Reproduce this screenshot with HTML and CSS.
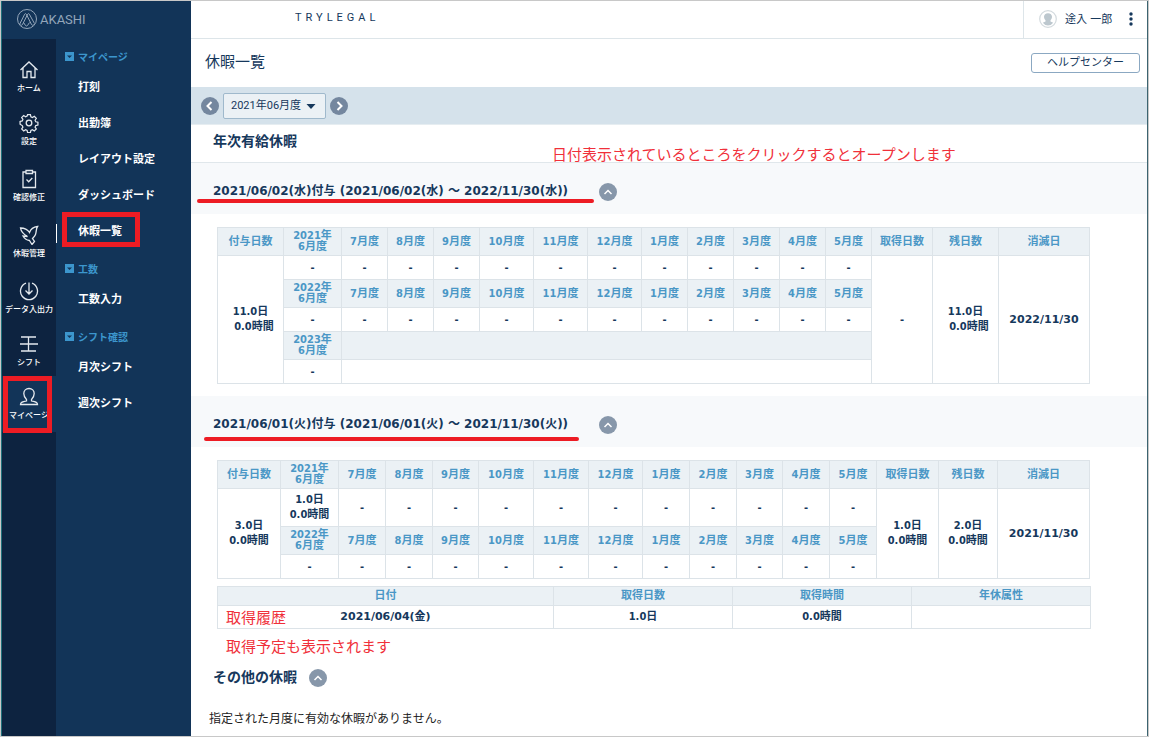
FILE: index.html
```html
<!DOCTYPE html>
<html lang="ja">
<head>
<meta charset="utf-8">
<title>休暇一覧 - AKASHI</title>
<link rel="stylesheet" href="styles.css">
</head>
<body>
<div class="app">
  <aside class="sidebar">
    <a class="brand" href="#">
      <svg class="brand-mark" viewBox="0 0 22 22" aria-hidden="true"><circle cx="11" cy="11" r="9.5"/><path d="M3.500 16.500 8.700 6.200Q9.500 5 10.300 6.200L15.500 16.500Q16.500 18 17.500 16.500M4.500 16.500Q5.500 18 6.500 16.500L11.700 6.200Q12.500 5 13.300 6.200L18.500 15.500M7.500 14.500l2 3q1 1 2 0l2-3"/></svg>
      <span>AKASHI</span>
    </a>
    <div class="navs">
      <nav class="rail" aria-label="メイン">
        <a class="rail-item rail-short" href="#"><svg viewBox="0 0 20 20"><path d="M1.500 10 10 2l8.500 8M4 8v9.500h4V11.500h4v6h4V8"/></svg><span>ホーム</span></a>
        <a class="rail-item" href="#"><svg viewBox="0 0 20 20"><circle cx="10" cy="10" r="2.800"/><path d="M8.500 1.500h3l.5 2.300 1.600.7 2-1.300 2.100 2.100-1.300 2 .7 1.600 2.300.5v3l-2.300.5-.7 1.600 1.300 2-2.100 2.100-2-1.300-1.600.7-.5 2.300h-3L8 18l-1.600-.7-2 1.300-2.100-2.100 1.300-2-.7-1.600L.6 11.500v-3L2.900 8l.7-1.600-1.300-2 2.100-2.100 2 1.300L8 2.900z" transform="translate(.5 .3) scale(.95)"/></svg><span>設定</span></a>
        <a class="rail-item" href="#"><svg viewBox="0 0 20 20"><path d="M7 3H4v15.500h12.500V3h-3M7 1.500h6.500v3H7zM7.500 10.500l2.200 2.200 3.600-3.700"/></svg><span>確認修正</span></a>
        <a class="rail-item" href="#"><svg viewBox="0 0 20 20"><path d="M1.500 3C5 3 8.500 4.500 10.500 7.500 11.500 4.500 14 2 18.500 1.500 17 3.500 17.500 7 16.500 9.500 15.800 11.500 14.500 12.500 13.500 13.500L15.500 16.500 13 19.500 10.500 15.500C7 15 5 13 4 11L8.500 11.500C5 9.500 2 6.500 1.500 3z"/></svg><span>休暇管理</span></a>
        <a class="rail-item rail-short" href="#"><svg viewBox="0 0 20 20"><path d="M7 2.200a8.500 8.500 0 1 0 6 0M10 1.500V13M6.500 9.500 10 13l3.500-3.500"/></svg><span>データ入出力</span></a>
        <a class="rail-item rail-short" href="#"><svg viewBox="0 0 20 20"><path d="M2 3h15M1 10h18M2 17h15M9.500 3v14"/></svg><span>シフト</span></a>
        <a class="rail-item rail-active marked" href="#"><svg viewBox="0 0 20 20"><path d="M7.500 12.500C5.500 10.500 4.800 8.500 4.800 6.500 4.800 3.500 7 1.500 10 1.500s5.200 2 5.200 5c0 2-.7 4-2.700 6v1.500c2.500.8 6 .5 6 3.500H1.500c0-3 3.500-2.700 6-3.500z"/></svg><span>マイページ</span></a>
      </nav>
      <nav class="menu" aria-label="サブ">
        <section class="menu-group">
          <h2 class="menu-head"><svg viewBox="0 0 9 9"><path class="box" d="M0 0h9v9H0z"/><path class="tri" d="M2 3.500h5L4.500 6z"/></svg>マイページ</h2>
          <a class="menu-item" href="#">打刻</a>
          <a class="menu-item" href="#">出勤簿</a>
          <a class="menu-item" href="#">レイアウト設定</a>
          <a class="menu-item" href="#">ダッシュボード</a>
          <a class="menu-item menu-current marked" href="#">休暇一覧</a>
        </section>
        <section class="menu-group">
          <h2 class="menu-head"><svg viewBox="0 0 9 9"><path class="box" d="M0 0h9v9H0z"/><path class="tri" d="M2 3.500h5L4.500 6z"/></svg>工数</h2>
          <a class="menu-item" href="#">工数入力</a>
        </section>
        <section class="menu-group">
          <h2 class="menu-head"><svg viewBox="0 0 9 9"><path class="box" d="M0 0h9v9H0z"/><path class="tri" d="M2 3.500h5L4.500 6z"/></svg>シフト確認</h2>
          <a class="menu-item" href="#">月次シフト</a>
          <a class="menu-item" href="#">週次シフト</a>
        </section>
      </nav>
    </div>
  </aside>

  <main class="main">
    <header class="topbar">
      <span class="company">TRYLEGAL</span>
      <div class="user">
        <svg class="avatar" viewBox="0 0 18 18" aria-hidden="true"><circle cx="9" cy="9" r="8.300" fill="#fff" stroke="#d3dade" stroke-width="1.200"/><path d="M9 3.200c2.500 0 4 1.600 4 3.600 0 1.500-.7 2.700-1.500 3.500v1.200l2.700 1.300A6.600 6.600 0 0 1 9 15.600a6.600 6.600 0 0 1-5.200-2.800l2.700-1.300v-1.200C5.700 9.500 5 8.300 5 6.800c0-2 1.500-3.600 4-3.600z" fill="#bcc7ce"/></svg>
        <span class="user-name">途入 一郎</span>
        <button class="more" type="button" aria-label="メニュー"><svg viewBox="0 0 4 14"><circle cx="2" cy="2" r="1.700"/><circle cx="2" cy="7" r="1.700"/><circle cx="2" cy="12" r="1.700"/></svg></button>
      </div>
    </header>

    <div class="title-row">
      <h1 class="page-title">休暇一覧</h1>
      <button class="help" type="button">ヘルプセンター</button>
    </div>

    <div class="period">
      <button class="round" type="button" aria-label="前の月度"><svg viewBox="0 0 18 18"><path d="M10.500 5 6.500 9l4 4"/></svg></button>
      <div class="period-select">
        <select aria-label="月度"><option>2021年06月度</option></select>
        <svg viewBox="0 0 10 5" aria-hidden="true"><path d="M.5 0h9L5 5z"/></svg>
      </div>
      <button class="round" type="button" aria-label="次の月度"><svg viewBox="0 0 18 18"><path d="m7.500 5 4 4-4 4"/></svg></button>
    </div>

    <div class="section-head">
      <h2 class="section-title">年次有給休暇</h2>
      <p class="note note-open">日付表示されているところをクリックするとオープンします</p>
    </div>

    <section>
      <div class="grant">
        <h3 class="grant-title stroke-wide">2021/06/02(水)付与 (2021/06/02(水) ～ 2022/11/30(水))</h3>
        <button class="round toggle" type="button" aria-label="閉じる"><svg viewBox="0 0 18 18"><path d="m5.500 11 3.500-3.500 3.500 3.500"/></svg></button>
      </div>
      <div class="tables">
        <table class="grid">
          <colgroup><col class="w66"><col class="w58"><col class="w46" span="3"><col class="w54" span="3"><col class="w46" span="5"><col class="w61"><col class="w66"><col class="w91"></colgroup>
          <tr class="head"><th>付与日数</th><th class="year">2021年<br>6月度</th><th>7月度</th><th>8月度</th><th>9月度</th><th>10月度</th><th>11月度</th><th>12月度</th><th>1月度</th><th>2月度</th><th>3月度</th><th>4月度</th><th>5月度</th><th>取得日数</th><th>残日数</th><th>消滅日</th></tr>
          <tr class="short"><td rowspan="5">11.0日<br>&nbsp;&nbsp;0.0時間</td><td>-</td><td>-</td><td>-</td><td>-</td><td>-</td><td>-</td><td>-</td><td>-</td><td>-</td><td>-</td><td>-</td><td>-</td><td rowspan="5">-</td><td rowspan="5">11.0日<br>&nbsp;&nbsp;0.0時間</td><td class="date" rowspan="5">2022/11/30</td></tr>
          <tr class="head"><th class="year">2022年<br>6月度</th><th>7月度</th><th>8月度</th><th>9月度</th><th>10月度</th><th>11月度</th><th>12月度</th><th>1月度</th><th>2月度</th><th>3月度</th><th>4月度</th><th>5月度</th></tr>
          <tr class="short"><td>-</td><td>-</td><td>-</td><td>-</td><td>-</td><td>-</td><td>-</td><td>-</td><td>-</td><td>-</td><td>-</td><td>-</td></tr>
          <tr class="head"><th class="year">2023年<br>6月度</th><th colspan="11"></th></tr>
          <tr class="short"><td>-</td><td colspan="11"></td></tr>
        </table>
      </div>
    </section>

    <section>
      <div class="grant">
        <h3 class="grant-title stroke-low">2021/06/01(火)付与 (2021/06/01(火) ～ 2021/11/30(火))</h3>
        <button class="round toggle" type="button" aria-label="閉じる"><svg viewBox="0 0 18 18"><path d="m5.500 11 3.500-3.500 3.500 3.500"/></svg></button>
      </div>
      <div class="tables">
        <table class="grid">
          <colgroup><col class="w63"><col class="w58"><col class="w47" span="2"><col class="w46"><col class="w55" span="2"><col class="w54"><col class="w47" span="2"><col class="w46"><col class="w47" span="2"><col class="w62"><col class="w59"><col class="w92"></colgroup>
          <tr class="head"><th>付与日数</th><th class="year">2021年<br>6月度</th><th>7月度</th><th>8月度</th><th>9月度</th><th>10月度</th><th>11月度</th><th>12月度</th><th>1月度</th><th>2月度</th><th>3月度</th><th>4月度</th><th>5月度</th><th>取得日数</th><th>残日数</th><th>消滅日</th></tr>
          <tr class="tall"><td rowspan="3">3.0日<br>0.0時間</td><td>1.0日<br>0.0時間</td><td>-</td><td>-</td><td>-</td><td>-</td><td>-</td><td>-</td><td>-</td><td>-</td><td>-</td><td>-</td><td>-</td><td rowspan="3">1.0日<br>0.0時間</td><td rowspan="3">2.0日<br>0.0時間</td><td class="date" rowspan="3">2021/11/30</td></tr>
          <tr class="head"><th class="year">2022年<br>6月度</th><th>7月度</th><th>8月度</th><th>9月度</th><th>10月度</th><th>11月度</th><th>12月度</th><th>1月度</th><th>2月度</th><th>3月度</th><th>4月度</th><th>5月度</th></tr>
          <tr class="short"><td>-</td><td>-</td><td>-</td><td>-</td><td>-</td><td>-</td><td>-</td><td>-</td><td>-</td><td>-</td><td>-</td><td>-</td></tr>
        </table>
        <div class="history">
          <table class="grid">
            <colgroup><col class="w336"><col class="w179" span="3"></colgroup>
            <tr class="history-head"><th>日付</th><th>取得日数</th><th>取得時間</th><th>年休属性</th></tr>
            <tr class="history-row"><td class="date">2021/06/04(金)</td><td>1.0日</td><td>0.0時間</td><td></td></tr>
          </table>
          <p class="note note-history">取得履歴</p>
        </div>
        <p class="note note-plan">取得予定も表示されます</p>
      </div>
    </section>

    <section>
      <div class="other">
        <h2 class="section-title">その他の休暇</h2>
        <button class="round toggle" type="button" aria-label="閉じる"><svg viewBox="0 0 18 18"><path d="m5.500 11 3.500-3.500 3.500 3.500"/></svg></button>
      </div>
      <p class="empty">指定された月度に有効な休暇がありません。</p>
    </section>
  </main>
</div>
</body>
</html>
```
FILE: styles.css
```css
*,
*::after {
  box-sizing: border-box;
}

body {
  margin: 0;
  color: #16385c;
  font-family: "DejaVu Sans Condensed", "Noto Sans CJK JP", sans-serif;
  font-size: 11px;
}

h1, h2, h3, p {
  margin: 0;
}

a {
  color: inherit;
  text-decoration: none;
}

button, select {
  margin: 0;
  padding: 0;
  color: inherit;
  font: inherit;
}

svg {
  display: block;
}

.app {
  display: flex;
  min-height: 100vh;
  border: 1px solid #c8c8c8;
}

/* Sidebar */

.sidebar {
  display: flex;
  flex-direction: column;
  flex: none;
  width: 190px;
  background: #123458;
  border-left: 1px solid #1f6f7a;
}

.brand {
  display: flex;
  align-items: center;
  gap: 2px;
  height: 38px;
  padding: 0 0 2px 14px;
  color: #94a6ba;
  font-family: Roboto, sans-serif;
  font-size: 13px;
  font-weight: 400;
}

.brand-mark {
  width: 22px;
  height: 22px;
  fill: none;
  stroke: #94a6ba;
}

.navs {
  display: flex;
  flex: 1;
}

.rail {
  width: 54px;
  padding-top: 10px;
  background: #0d2340;
}

.rail-item {
  display: flex;
  flex-direction: column;
  align-items: center;
  gap: 3px;
  height: 56px;
  padding-top: 11px;
  color: #fff;
  font-size: 8px;
  font-weight: 500;
  line-height: 12px;
  white-space: nowrap;
}

.rail-short {
  height: 53px;
}

.rail-item svg {
  width: 20px;
  height: 20px;
  fill: none;
  stroke: #e4e9ee;
  stroke-width: 1.3;
}

.rail-active {
  background: #123458;
}

.menu {
  display: flex;
  flex-direction: column;
  flex: 1;
  gap: 8px;
  padding-top: 5px;
}

.menu-head {
  display: flex;
  align-items: center;
  gap: 4px;
  height: 24px;
  padding-left: 9px;
  color: #3c96cd;
  font-size: 10px;
  font-weight: 700;
}

.menu-head svg {
  width: 9px;
  height: 9px;
}

.menu-head .box {
  fill: #3c96cd;
}

.menu-head .tri {
  fill: #123458;
}

.menu-item {
  display: flex;
  align-items: center;
  height: 36px;
  padding-left: 22px;
  color: #fff;
  font-weight: 700;
}

.menu-current {
  border-left: 1px solid #fff;
  border-image: linear-gradient(transparent 12px, #fff 12px, #fff 30px, transparent 30px) 1;
  padding-left: 21px;
}

.marked {
  position: relative;
}

.marked::after {
  content: "";
  position: absolute;
  border: 5px solid #ed1c24;
}

.rail-active::after {
  inset: 0 4px -1px 1px;
}

.menu-current::after {
  top: 0;
  left: 5px;
  width: 78px;
  height: 35px;
}

/* Main column */

.main {
  flex: 1;
  min-width: 0;
  background: #fff;
  border-right: 1px solid #3c6470;
}

.topbar {
  display: flex;
  justify-content: space-between;
  height: 38px;
  border-bottom: 1px solid #dde5e9;
}

.company {
  padding: 10px 0 0 104px;
  font-family: Roboto, sans-serif;
  letter-spacing: 4px;
}

.user {
  display: flex;
  align-items: center;
  gap: 8px;
  width: 124px;
  padding: 0 12px 2px 15px;
  border-left: 1px solid #dde5e9;
}

.avatar {
  width: 18px;
  height: 18px;
}

.user-name {
  flex: 1;
  padding-bottom: 2px;
  white-space: nowrap;
}

.more {
  display: flex;
  justify-content: center;
  width: 8px;
  background: none;
  border: 0;
}

.more svg {
  width: 4px;
  height: 14px;
  fill: #16385c;
}

.title-row {
  display: flex;
  align-items: center;
  justify-content: space-between;
  height: 48px;
  padding: 0 7px 0 14px;
}

.page-title {
  padding-bottom: 6px;
  font-size: 15px;
  font-weight: 400;
}

.help {
  width: 109px;
  height: 20px;
  background: #fff;
  border: 1px solid #8ba8c2;
  border-radius: 3px;
  line-height: 16px;
}

.period {
  display: flex;
  align-items: center;
  gap: 4px;
  height: 38px;
  padding-left: 10px;
  background: #d5e2eb;
  border-bottom: 1px solid #e6edf1;
}

.round {
  flex: none;
  width: 18px;
  height: 18px;
  background: #74879f;
  border: 0;
  border-radius: 50%;
}

.round svg {
  width: 18px;
  height: 18px;
  fill: none;
  stroke: #fff;
  stroke-width: 2;
}

.toggle {
  background: #8797aa;
}

.toggle svg {
  stroke-width: 1.5;
}

.period-select {
  position: relative;
}

.period-select select {
  display: block;
  width: 103px;
  height: 26px;
  padding-left: 7px;
  appearance: none;
  background: #ebf1f5;
  border: 1px solid #9fb9cc;
  border-radius: 2px;
  font-family: Roboto, "Noto Sans CJK JP", sans-serif;
}

.period-select svg {
  position: absolute;
  top: 11px;
  right: 10px;
  width: 10px;
  height: 5px;
  fill: #16385c;
  pointer-events: none;
}

.section-head {
  position: relative;
  height: 38px;
  padding: 6px 22px;
  border-bottom: 1px solid #e0e7eb;
}

.section-title {
  font-size: 14px;
  font-weight: 700;
  line-height: 21px;
}

.note {
  color: #f0303a;
  font-size: 15px;
  line-height: 22px;
  white-space: nowrap;
}

.note-open {
  position: absolute;
  top: 19px;
  left: 361px;
}

.grant {
  display: flex;
  align-items: center;
  gap: 18px;
  height: 51px;
  padding: 6px 22px 0;
  background: #f7f9fb;
}

.grant-title {
  position: relative;
  min-width: 368px;
  padding-bottom: 1px;
  font-family: "DejaVu Sans", "Noto Sans CJK JP", sans-serif;
  font-size: 12px;
  font-weight: 700;
  line-height: 18px;
  white-space: nowrap;
}

.grant-title::after {
  content: "";
  position: absolute;
  height: 4px;
  background: #ed1c24;
  border-radius: 2px;
}

.stroke-wide::after {
  top: 17px;
  right: -13px;
  left: -16px;
}

.stroke-low::after {
  top: 22px;
  right: 2px;
  left: -9px;
}

.tables {
  padding: 13px 59px 12px 26px;
}

.grid {
  width: 100%;
  table-layout: fixed;
  border-collapse: collapse;
  font-weight: 700;
  line-height: 15px;
  text-align: center;
}

.grid th,
.grid td {
  padding: 0 0 1px;
  border: 1px solid #dce3e8;
}

.grid th {
  background: #ebf1f5;
  color: #4a97c6;
  font-weight: 700;
}

.grid .year {
  line-height: 11px;
}

.grid .date {
  font-family: "DejaVu Sans", "Noto Sans CJK JP", sans-serif;
}

.head {
  height: 28px;
}

.short {
  height: 24px;
}

.tall {
  height: 38px;
}

.history-head {
  height: 19px;
}

.history-row {
  height: 23px;
}

.w46 { width: 46px; }
.w47 { width: 47px; }
.w54 { width: 54px; }
.w55 { width: 55px; }
.w58 { width: 58px; }
.w59 { width: 59px; }
.w61 { width: 61px; }
.w62 { width: 62px; }
.w63 { width: 63px; }
.w66 { width: 66px; }
.w91 { width: 91px; }
.w92 { width: 92px; }
.w179 { width: 179px; }
.w336 { width: 336px; }

.history {
  position: relative;
  margin-top: 7px;
}

.note-history {
  position: absolute;
  bottom: 0;
  left: 9px;
}

.note-plan {
  padding: 7px 0 0 9px;
}

.other {
  display: flex;
  align-items: center;
  gap: 12px;
  margin-top: -3px;
  padding: 0 22px;
}

.empty {
  padding: 22px 18px 0;
  color: #222;
  font-size: 12px;
  line-height: 18px;
}
```
